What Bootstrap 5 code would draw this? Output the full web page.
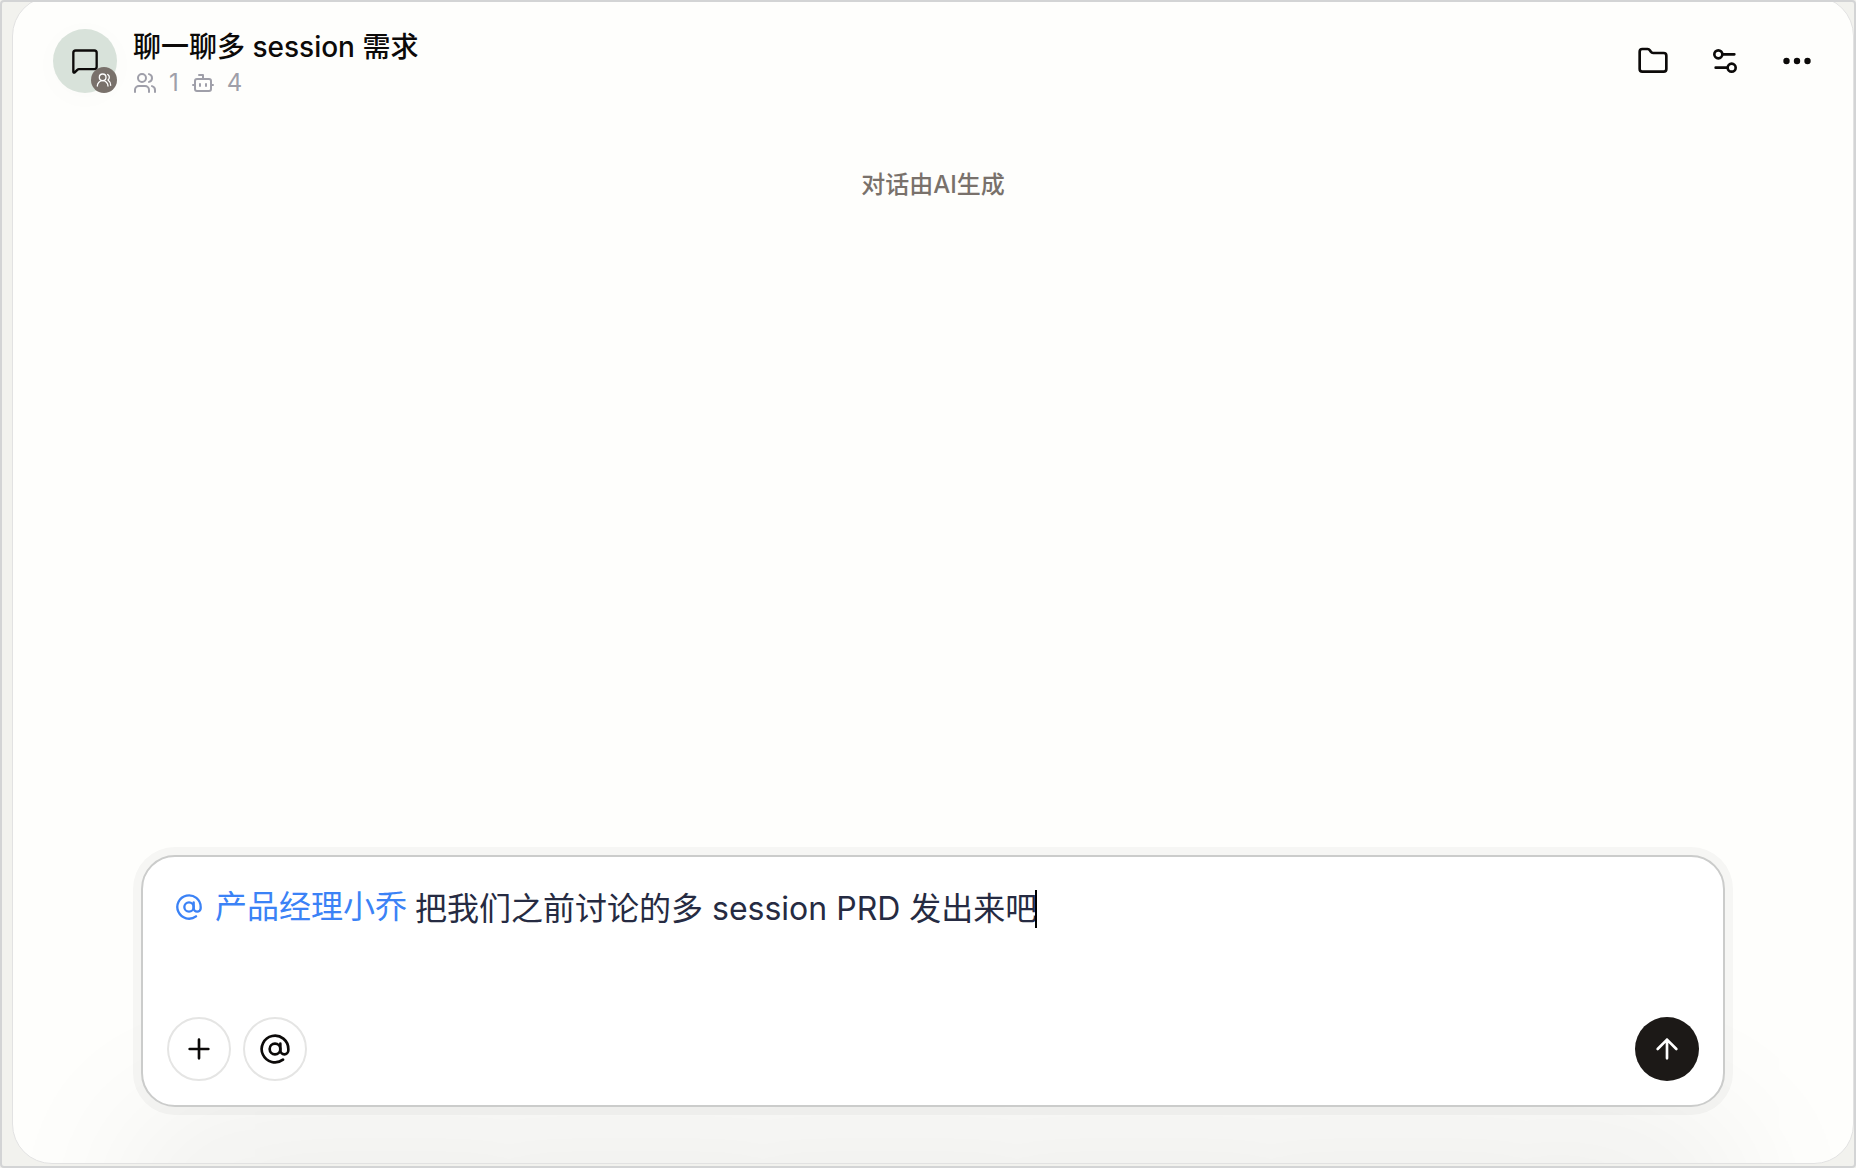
<!DOCTYPE html>
<html lang="zh-CN">
<head>
<meta charset="utf-8">
<meta name="viewport" content="width=device-width, initial-scale=1">
<title>聊一聊多 session 需求</title>
<link href="https://cdn.jsdelivr.net/npm/bootstrap@5.3.0/dist/css/bootstrap.min.css" rel="stylesheet">
<style>
  body { font-family: Inter, "Noto Sans CJK SC", sans-serif; background: #f2f2ee; color: #0c0a09; }
  .app-window { border: 2px solid #d3d4d5; border-radius: 4px; padding: 0 0 2px 10px; }
  .chat-panel { background: #fefefc; border: 1px solid #e2e2e2; border-radius: 40px; margin-top: -6px; overflow: hidden; }
  .chat-head { padding: 32px 24px 0 40px; }
  .avatar { width: 64px; height: 64px; background: #d8e2da; box-shadow: 0 4px 32px rgba(0,0,0,.02); }
  .avatar-badge { width: 26px; height: 26px; background: #79716b; color: #fff; right: 0; bottom: 0; }
  .chat-title { font-size: 28px; line-height: 36px; font-weight: 500; }
  .chat-counts { font-size: 24px; line-height: 36px; color: #9f9fa9; gap: 12px; }
  .icon-btn { width: 64px; height: 64px; color: #0c0a09; }
  .ai-note { font-size: 24px; line-height: 32px; color: #79716b; font-weight: 500; margin-top: 68px; }
  .composer-wrap { padding: 0 128px 56px 128px; }
  .composer { background: #fff; border: 2px solid #cbcccb; border-radius: 34px; padding: 24px;
    box-shadow: 0 0 0 8px rgba(28,25,23,.035), 0 270px 160px rgba(28,25,23,.08); }
  .compose-line { font-size: 32px; line-height: 52px; padding-left: 8px; }
  .mention { color: #3b82f6; margin: 0 8px 4px 0; gap: 12px; }
  .compose-input { width: 620px; height: 52px; padding: 0; border: 0; outline: 0; background: transparent; color: #262b42; }
  .caret { width: 2px; height: 38px; background: #000; }
  .compose-tools { margin-top: 80px; gap: 12px; }
  .round-btn { width: 64px; height: 64px; border: 2px solid #e5e5e4; background: transparent; color: #0c0a09; }
  .send-btn { width: 64px; height: 64px; background: #1c1917; color: #fff; }
  svg { display: block; fill: none; stroke: currentColor; stroke-width: 2; stroke-linecap: round; stroke-linejoin: round; }
</style>
</head>
<body>
<div class="app-window vh-100 d-flex flex-column overflow-hidden">
  <main class="chat-panel flex-grow-1 d-flex flex-column">
    <header class="chat-head d-flex align-items-start justify-content-between">
      <div class="d-flex align-items-start gap-3">
        <div class="avatar rounded-circle position-relative d-flex align-items-center justify-content-center">
          <svg width="28" height="28" viewBox="0 0 24 24"><path d="M22 17a2 2 0 0 1-2 2H6.828a2 2 0 0 0-1.414.586l-2.202 2.202A.71.71 0 0 1 2 21.286V5a2 2 0 0 1 2-2h16a2 2 0 0 1 2 2z"/></svg>
          <span class="avatar-badge rounded-circle position-absolute d-flex align-items-center justify-content-center">
            <svg width="16" height="16" viewBox="0 0 24 24"><path d="M18 21a8 8 0 0 0-16 0"/><circle cx="10" cy="8" r="5"/><path d="M22 20c0-3.370-2-6.500-4-8a5 5 0 0 0-.450-8.300"/></svg>
          </span>
        </div>
        <div>
          <h1 class="chat-title mb-0">聊一聊多 session 需求</h1>
          <div class="chat-counts d-flex align-items-center">
            <svg width="24" height="24" viewBox="0 0 24 24"><path d="M16 21v-2a4 4 0 0 0-4-4H6a4 4 0 0 0-4 4v2"/><circle cx="9" cy="7" r="4"/><path d="M22 21v-2a4 4 0 0 0-3-3.870M16 3.130a4 4 0 0 1 0 7.750"/></svg>
            <span>1</span>
            <svg width="24" height="24" viewBox="0 0 24 24"><path d="M12 8V4H8"/><rect width="16" height="12" x="4" y="8" rx="2"/><path d="M2 14h2M20 14h2M15 13v2M9 13v2"/></svg>
            <span>4</span>
          </div>
        </div>
      </div>
      <nav class="d-flex gap-2" aria-label="对话操作">
        <button type="button" class="icon-btn btn border-0 p-0 d-flex align-items-center justify-content-center" aria-label="文件">
          <svg width="32" height="32" viewBox="0 0 24 24"><path d="M20 20a2 2 0 0 0 2-2V8a2 2 0 0 0-2-2h-7.900a2 2 0 0 1-1.690-.900L9.600 3.900A2 2 0 0 0 7.930 3H4a2 2 0 0 0-2 2v13a2 2 0 0 0 2 2Z"/></svg>
        </button>
        <button type="button" class="icon-btn btn border-0 p-0 d-flex align-items-center justify-content-center" aria-label="设置">
          <svg width="32" height="32" viewBox="0 0 24 24"><path d="M10 7h9M5 17h9"/><circle cx="17" cy="17" r="3"/><circle cx="7" cy="7" r="3"/></svg>
        </button>
        <button type="button" class="icon-btn btn border-0 p-0 d-flex align-items-center justify-content-center" aria-label="更多">
          <svg width="32" height="32" viewBox="0 0 32 32"><g fill="currentColor" stroke="none"><circle cx="5.500" cy="16" r="3.200"/><circle cx="16" cy="16" r="3.200"/><circle cx="26.500" cy="16" r="3.200"/></g></svg>
        </button>
      </nav>
    </header>
    <p class="ai-note text-center mb-0">对话由AI生成</p>
    <div class="composer-wrap mt-auto">
      <form class="composer">
        <div class="compose-line d-flex align-items-center">
          <a href="#" class="mention text-decoration-none d-flex align-items-center">
            <svg width="28" height="28" viewBox="0 0 24 24"><circle cx="12" cy="12" r="4"/><path d="M16 8v5a3 3 0 0 0 6 0v-1a10 10 0 1 0-4 8"/></svg>
            <span>产品经理小乔</span>
          </a>
          <input type="text" class="compose-input" aria-label="消息" value="把我们之前讨论的多 session PRD 发出来吧">
          <span class="caret"></span>
        </div>
        <div class="compose-tools d-flex align-items-center">
          <button type="button" class="round-btn btn rounded-circle p-0 d-flex align-items-center justify-content-center" aria-label="添加">
            <svg width="32" height="32" viewBox="0 0 24 24"><path d="M5 12h14M12 5v14"/></svg>
          </button>
          <button type="button" class="round-btn btn rounded-circle p-0 d-flex align-items-center justify-content-center" aria-label="提及">
            <svg width="32" height="32" viewBox="0 0 24 24"><circle cx="12" cy="12" r="4"/><path d="M16 8v5a3 3 0 0 0 6 0v-1a10 10 0 1 0-4 8"/></svg>
          </button>
          <button type="submit" class="send-btn btn border-0 rounded-circle p-0 ms-auto d-flex align-items-center justify-content-center" aria-label="发送">
            <svg width="32" height="32" viewBox="0 0 24 24"><path d="m5 12 7-7 7 7M12 19V5"/></svg>
          </button>
        </div>
      </form>
    </div>
  </main>
</div>
<script src="https://cdn.jsdelivr.net/npm/bootstrap@5.3.0/dist/js/bootstrap.bundle.min.js"></script>
</body>
</html>
